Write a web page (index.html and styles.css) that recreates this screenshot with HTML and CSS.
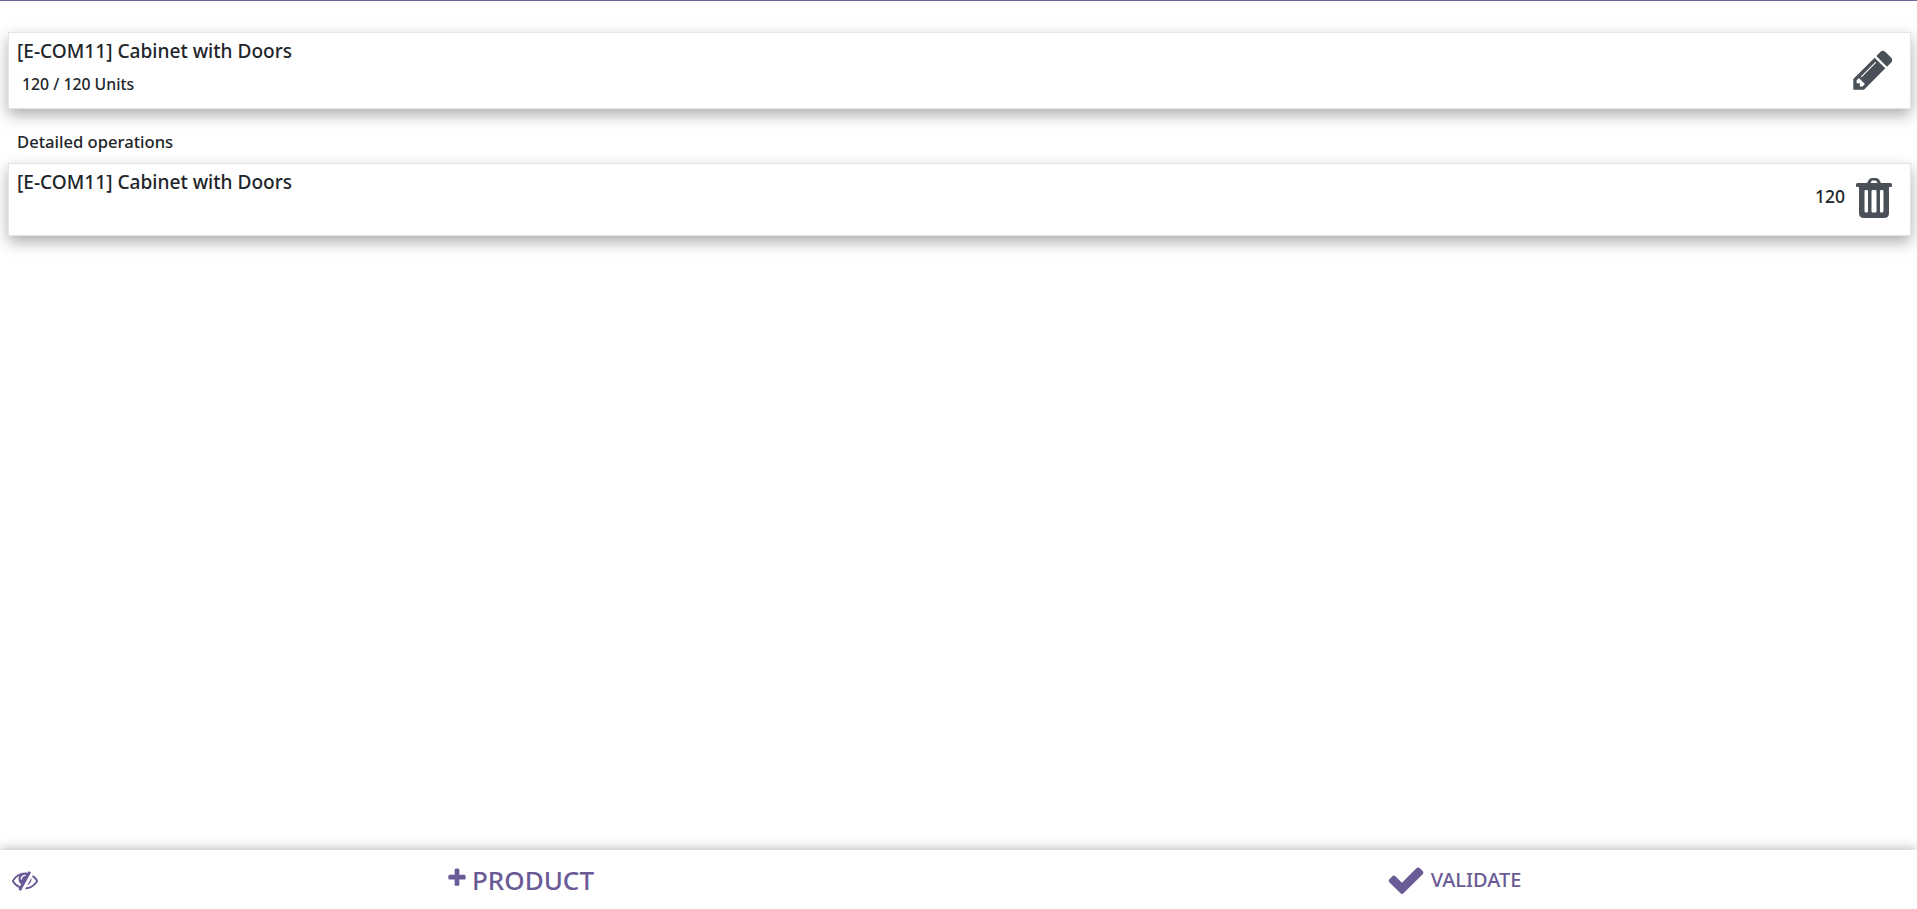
FILE: index.html
```html
<!DOCTYPE html>
<html lang="en">
<head>
    <meta charset="UTF-8">
    <title>Detailed operations</title>
    <link rel="stylesheet" href="styles.css">
</head>
<body>
    <main class="content">
        <div class="line-card summary-card">
            <div class="line-info">
                <div class="product-name">[E-COM11] Cabinet with Doors</div>
                <div class="qty-line">120 / 120 Units</div>
            </div>
            <button class="icon-btn" aria-label="Edit">
                <svg class="icon-edit" viewBox="0 0 1792 1792"><path d="M491 1536l91-91-235-235-91 91v107h128v128h107zm523-928q0-22-22-22-10 0-17 7l-542 542q-7 7-7 17 0 22 22 22 10 0 17-7l542-542q7-7 7-17zm-54-192l416 416-832 832h-416v-416zm683 96q0 53-37 90l-166 166-416-416 166-165q36-38 90-38 53 0 91 38l235 234q37 39 37 91z"/></svg>
            </button>
        </div>

        <h2 class="section-title">Detailed operations</h2>

        <div class="line-card detail-card">
            <div class="product-name">[E-COM11] Cabinet with Doors</div>
            <div class="detail-actions">
                <span class="detail-qty">120</span>
                <button class="icon-btn" aria-label="Delete">
                    <svg class="icon-trash" viewBox="0 0 36 40">
                        <path fill-rule="evenodd" d="M11 5 L13 1.5 Q14 0 16 0 H20 Q22 0 23 1.5 L25 5 H34.5 Q36 5 36 6.5 V8 Q36 9 35 9 H33 V35 Q33 40 28 40 H8 Q3 40 3 35 V9 H1 Q0 9 0 8 V6.5 Q0 5 1.5 5 Z M14.5 5 H21.5 L20.5 3 Q20 2.5 19.5 2.5 H16.5 Q16 2.5 15.5 3 Z M9.5 12 Q8.5 12 8.5 13 V33 Q8.5 34.5 10 34.5 H11 Q12 34.5 12 33.5 V13 Q12 12 11 12 Z M16.5 12 Q15.5 12 15.5 13 V33.5 Q15.5 34.5 16.5 34.5 H19.5 Q20.5 34.5 20.5 33.5 V13 Q20.5 12 19.5 12 Z M25 12 Q24 12 24 13 V33.5 Q24 34.5 25 34.5 H26 Q27.5 34.5 27.5 33 V13 Q27.5 12 26.5 12 Z"/>
                    </svg>
                </button>
            </div>
        </div>
    </main>

    <footer class="footer-bar">
        <button class="footer-btn btn-eye" aria-label="Show">
            <svg class="icon-eye" viewBox="0 0 1792 1792"><path d="M555 1335l78-141q-87-63-136-159t-49-203q0-121 61-225-229 117-381 353 167 258 427 375zm389-759q0-20-14-34t-34-14q-125 0-214.5 89.5t-89.5 214.5q0 20 14 34t34 14 34-14 14-34q0-86 61-147t147-61q20 0 34-14t14-34zm363-191q0 7-1 9-106 189-316 567t-315 566l-49 89q-10 16-28 16-12 0-134-70-16-10-16-28 0-12 44-87-143-65-263.5-173t-208.5-245q-20-31-20-69t20-69q153-235 380-371t496-136q89 0 180 17l54-97q10-16 28-16 5 0 18 6t31 15.5 33 18.5 31.5 18.5 19.5 11.5q16 10 16 27zm37 447q0 139-79 253.5t-209 164.5l280-502q8 45 8 84zm448 128q0 35-20 69-39 64-109 145-150 172-347.5 267t-419.5 95l74-132q212-18 392.5-137t301.5-307q-115-179-282-294l63-112q95 64 182.5 153t144.5 184q20 34 20 69z"/></svg>
        </button>
        <button class="footer-btn btn-product">
            <svg class="icon-plus" viewBox="0 0 1792 1792"><path d="M1600 736v192q0 40-28 68t-68 28h-416v416q0 40-28 68t-68 28h-192q-40 0-68-28t-28-68v-416h-416q-40 0-68-28t-28-68v-192q0-40 28-68t68-28h416v-416q0-40 28-68t68-28h192q40 0 68 28t28 68v416h416q40 0 68 28t28 68z"/></svg>
            <span>PRODUCT</span>
        </button>
        <button class="footer-btn btn-validate">
            <svg class="icon-check" viewBox="0 0 1792 1792"><path d="M1671 566q0 40-28 68l-724 724-136 136q-28 28-68 28t-68-28l-136-136-362-362q-28-28-28-68t28-68l136-136q28-28 68-28t68 28l294 295 656-657q28-28 68-28t68 28l136 136q28 28 28 68z"/></svg>
            <span>VALIDATE</span>
        </button>
    </footer>
</body>
</html>
```

FILE: styles.css
```css
* {
    box-sizing: border-box;
}

html, body {
    height: 100%;
}

body {
    margin: 0;
    display: flex;
    flex-direction: column;
    background-color: #FFFFFF;
    color: #212529;
    font-family: 'Noto Sans', sans-serif;
    border-top: 1px solid #71639E;
    overflow: hidden;
}

.content {
    flex: 1;
    padding: 31px 6px 0 8px;
}

button {
    background: none;
    border: none;
    padding: 0;
    font-family: inherit;
    cursor: pointer;
}

.line-card {
    display: flex;
    justify-content: space-between;
    background-color: #FFFFFF;
    border: 1px solid #E4E4EC;
    box-shadow: 0 6px 14px rgba(0, 0, 0, 0.32);
}

.summary-card {
    height: 77px;
    align-items: center;
    padding: 0 14px 0 8px;
}

.detail-card {
    height: 73px;
    padding: 7px 18px 0 8px;
}

.product-name {
    font-size: 19.1px;
    line-height: 22px;
    font-weight: 500;
}

.line-info .product-name {
    margin-top: -9px;
}

.qty-line {
    margin: 14px 0 0 5px;
    font-size: 15.8px;
    line-height: 17px;
    font-weight: 500;
}

.section-title {
    margin: 23px 0 12px 9px;
    font-size: 16.6px;
    line-height: 19px;
    font-weight: 500;
}

.detail-actions {
    display: flex;
    align-items: flex-start;
    gap: 11px;
}

.detail-qty {
    margin-top: 16px;
    font-size: 17.5px;
    line-height: 19px;
    font-weight: 500;
}

.icon-btn {
    display: flex;
}

.icon-btn svg {
    fill: #495057;
}

.icon-edit {
    width: 46px;
    height: 46px;
    margin-top: -2px;
}

.icon-trash {
    width: 36px;
    height: 40px;
    margin-top: 7px;
}

.footer-bar {
    display: flex;
    align-items: center;
    flex-shrink: 0;
    height: 59px;
    background-color: #FFFFFF;
    box-shadow: 0 -2px 10px rgba(0, 0, 0, 0.25);
}

.footer-btn {
    display: flex;
    align-items: center;
    justify-content: center;
    color: #6A5A96;
}

.footer-btn svg {
    fill: #6A5A96;
}

.btn-eye {
    width: 50px;
}

.btn-product {
    width: 940px;
    gap: 4px;
    font-size: 26px;
    font-weight: 500;
}

.btn-validate {
    flex: 1;
    gap: 5px;
    font-size: 20px;
    font-weight: 500;
}

.icon-eye {
    width: 26px;
    height: 26px;
}

.icon-plus {
    width: 22px;
    height: 22px;
    margin-top: -4px;
}

.icon-check {
    width: 40px;
    height: 40px;
}
```
